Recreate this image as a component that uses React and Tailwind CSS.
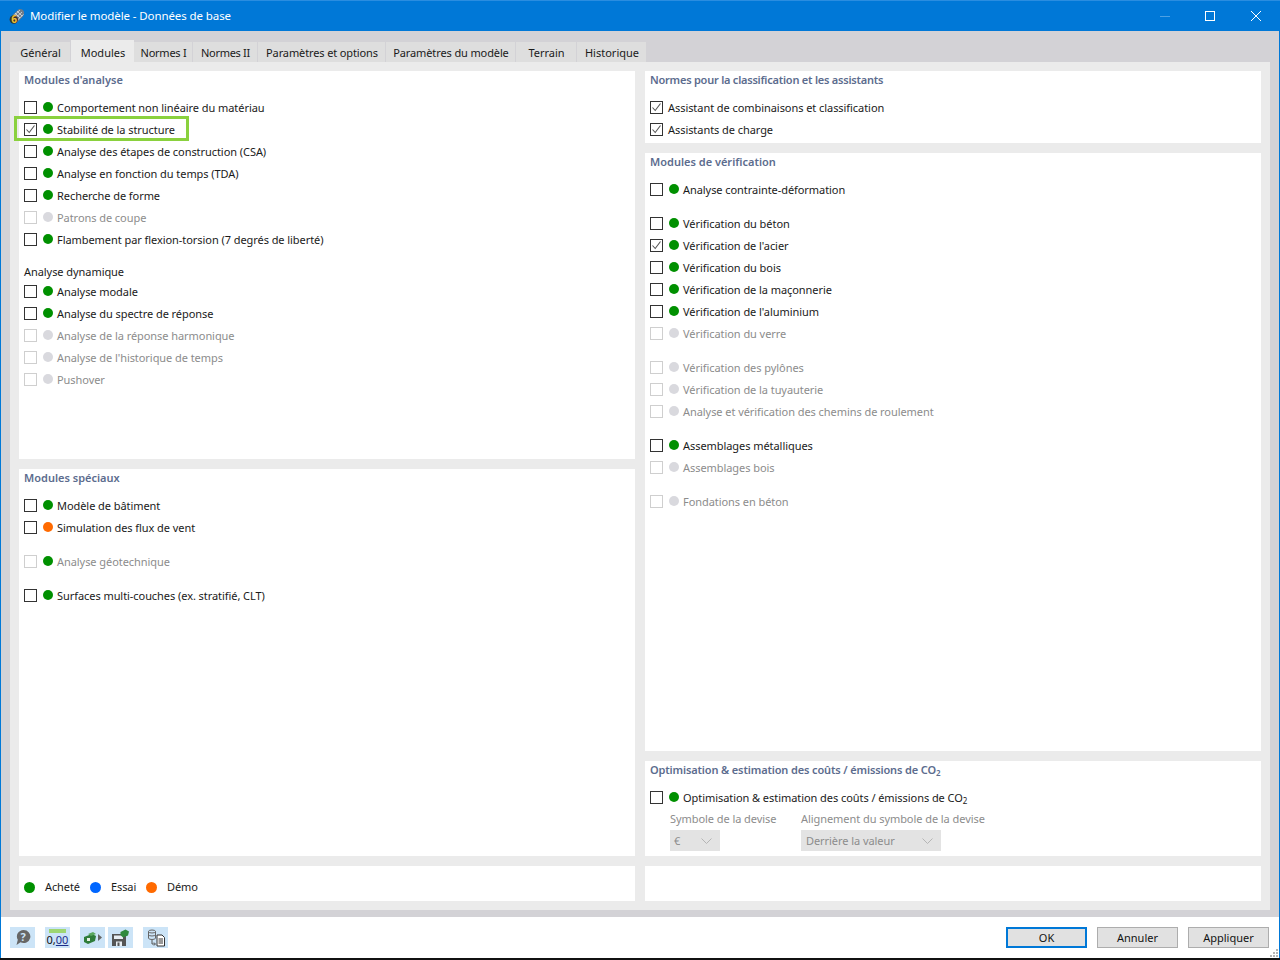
import React from "react";

const FONT = "font-['Noto_Sans','Open_Sans',sans-serif]";

function Check({ checked, disabled }) {
  return (
    <span className={`mt-[5px] flex h-[13px] w-[13px] shrink-0 items-center justify-center border bg-white ${disabled ? "border-[#cfcfcf]" : "border-[#333333]"}`}>
      {checked && (
        <svg width="11" height="11" viewBox="0 0 11 11" fill="none">
          <path d="M1.5 5.5 L4.2 8.5 L9.5 1.5" stroke="#555555" strokeWidth="1.1" />
        </svg>
      )}
    </span>
  );
}

function Row({ label, color = "bg-[#009000]", checked, disabled, dot = true, mt = "", highlight, dim }) {
  return (
    <div className={`relative flex h-[22px] items-start ${mt}`}>
      {highlight && <div className="absolute left-[-10px] top-[-2px] h-[25px] w-[175px] border-[3px] border-[#8ad13e]" />}
      <Check checked={checked} disabled={disabled} />
      {dot && <span className={`ml-[6px] mt-[6px] h-[10px] w-[10px] shrink-0 rounded-full ${disabled && !dim ? "bg-[#d9d9de]" : color}`} />}
      <span className={`${dot ? "ml-[4px]" : "ml-[5px]"} self-center whitespace-nowrap text-[11px] leading-none tracking-[-0.06px] ${disabled ? "text-[#8c8c8c]" : "text-[#1a1a1a]"}`}>
        {label}
      </span>
    </div>
  );
}

function Panel({ title, className = "", titleClass = "", children }) {
  return (
    <section className={`bg-white pl-[5px] ${className}`}>
      <h2 className={`mb-[9px] flex h-[16px] items-center text-[11px] font-semibold leading-none text-[#5c6c8e] ${titleClass}`}>{title}</h2>
      {children}
    </section>
  );
}

const Sub = () => <span className="relative top-[2px] text-[8px] leading-none">2</span>;

function Select({ value, className }) {
  return (
    <div className={`flex h-[21px] items-center justify-between bg-[#e3e3e3] pl-[4px] pr-[8px] text-[11px] text-[#8c8c8c] ${className}`}>
      <span className="pt-[2px]">{value}</span>
      <svg width="11" height="6" viewBox="0 0 11 6" fill="none"><path d="M0.5 0.5 L5.5 5.5 L10.5 0.5" stroke="#b5b5b5" /></svg>
    </div>
  );
}

const tabs = [
  ["Général", "w-[61px]"],
  ["Modules", "w-[63px]"],
  ["Normes I", "w-[59px] tracking-[-0.25px]"],
  ["Normes II", "w-[65px] tracking-[-0.3px]"],
  ["Paramètres et options", "w-[128px] tracking-[-0.12px]"],
  ["Paramètres du modèle", "w-[130px] tracking-[-0.12px]"],
  ["Terrain", "w-[61px]"],
  ["Historique", "w-[70px]"],
];

function IconBtn({ children, className = "" }) {
  return <div className={`flex h-[21px] w-[25px] items-center justify-center bg-[#cce4f7] ${className}`}>{children}</div>;
}

function DlgBtn({ label, primary }) {
  return (
    <div className={`flex h-[21px] w-[81px] items-center justify-center bg-[#e1e1e1] pt-[2px] text-[11px] text-[#111111] ${primary ? "border-2 border-[#0078d7]" : "border border-[#adadad]"}`}>
      {label}
    </div>
  );
}

export default function App() {
  return (
    <div className={`${FONT} flex h-[960px] w-[1280px] flex-col overflow-hidden bg-white`}>
      <header className="flex h-[31px] shrink-0 items-center border-t border-[#2a8de0] bg-[#0078d7] text-white">
        <svg className="ml-[9px]" width="16" height="22" viewBox="0 0 16 22">
          <g transform="translate(0 2.5)">
            <path d="M3 8 L10 1.5 Q14 1 15 4.5 Q15.5 7 14 9 L8 15 L4 12 Z" fill="#6f7b88" />
            <path d="M5 8 L11 2.5 M7 10 L13 4.5 M9 12 L14.5 7 M8 3.5 L13 8.5 M6 5.5 L11 10.5" stroke="#dbe2e9" strokeWidth="0.8" />
            <circle cx="4.8" cy="12" r="4.2" fill="#333333" />
            <text x="2.2" y="15.8" fontSize="10" fontWeight="700" fill="#f2c230">6</text>
          </g>
        </svg>
        <span className="ml-[5px] text-[11.5px] tracking-[-0.1px]">Modifier le modèle - Données de base</span>
        <div className="ml-auto flex items-center">
          <div className="mr-[35px] h-px w-[10px] bg-[#4da1e4]" />
          <div className="mr-[36px] h-[10px] w-[10px] border border-white" />
          <svg className="mr-[19px]" width="10" height="10" viewBox="0 0 10 10"><path d="M0 0 L10 10 M10 0 L0 10" stroke="#ffffff" strokeWidth="1" /></svg>
        </div>
      </header>

      <div className="flex min-h-0 flex-1 flex-col border-x border-[#0078d7] bg-[#d3d2d6]">
        <nav className="flex h-[31px] shrink-0 items-end pl-[9px]">
          {tabs.map(([t, w], i) => (
            <div
              key={t}
              className={`flex items-center justify-center pl-[1px] text-[11px] text-[#1a1a1a] ${w} ${i === 1 ? "h-[22px] bg-[#ebebeb] pt-[4px]" : "h-[20px] border-r border-[#d3d2d6] bg-[#dedede] pt-[2px]"}`}
            >
              {t}
            </div>
          ))}
        </nav>
        <div className="mx-[9px] flex h-[848px] shrink-0 gap-[10px] bg-[#ebebeb] p-[9px]">
          <div className="flex w-[616px] flex-col gap-[10px]">
            <Panel title="Modules d'analyse" className="h-[388px]">
              <Row label="Comportement non linéaire du matériau" />
              <Row label="Stabilité de la structure" checked highlight />
              <Row label="Analyse des étapes de construction (CSA)" />
              <Row label="Analyse en fonction du temps (TDA)" />
              <Row label="Recherche de forme" />
              <Row label="Patrons de coupe" disabled />
              <Row label="Flambement par flexion-torsion (7 degrés de liberté)" />
              <div className="mt-[14px] flex h-[16px] items-center text-[11px] tracking-[-0.06px] text-[#1a1a1a]">Analyse dynamique</div>
              <Row label="Analyse modale" />
              <Row label="Analyse du spectre de réponse" />
              <Row label="Analyse de la réponse harmonique" disabled />
              <Row label="Analyse de l'historique de temps" disabled />
              <Row label="Pushover" disabled />
            </Panel>
            <Panel title="Modules spéciaux" className="h-[387px]">
              <Row label="Modèle de bâtiment" />
              <Row label="Simulation des flux de vent" color="bg-[#ff6a00]" />
              <Row label="Analyse géotechnique" disabled dim mt="mt-[12px]" />
              <Row label="Surfaces multi-couches (ex. stratifié, CLT)" mt="mt-[12px]" />
            </Panel>
            <div className="flex h-[35px] items-center bg-white pl-[5px] pt-[7px] text-[11px] tracking-[-0.1px] text-[#1a1a1a]">
              <span className="h-[11px] w-[11px] rounded-full bg-[#009000]" />
              <span className="ml-[10px] w-[35px]">Acheté</span>
              <span className="ml-[10px] h-[11px] w-[11px] rounded-full bg-[#0066ff]" />
              <span className="ml-[10px] w-[25px]">Essai</span>
              <span className="ml-[10px] h-[11px] w-[11px] rounded-full bg-[#ff6a00]" />
              <span className="ml-[10px]">Démo</span>
            </div>
          </div>

          <div className="flex w-[616px] flex-col gap-[10px]">
            <Panel title="Normes pour la classification et les assistants" titleClass="tracking-[-0.23px]" className="h-[72px]">
              <Row label="Assistant de combinaisons et classification" checked dot={false} />
              <Row label="Assistants de charge" checked dot={false} />
            </Panel>
            <Panel title="Modules de vérification" className="h-[598px]">
              <Row label="Analyse contrainte-déformation" />
              <Row label="Vérification du béton" mt="mt-[12px]" />
              <Row label="Vérification de l'acier" checked />
              <Row label="Vérification du bois" />
              <Row label="Vérification de la maçonnerie" />
              <Row label="Vérification de l'aluminium" />
              <Row label="Vérification du verre" disabled />
              <Row label="Vérification des pylônes" disabled mt="mt-[12px]" />
              <Row label="Vérification de la tuyauterie" disabled />
              <Row label="Analyse et vérification des chemins de roulement" disabled />
              <Row label="Assemblages métalliques" mt="mt-[12px]" />
              <Row label="Assemblages bois" disabled />
              <Row label="Fondations en béton" disabled mt="mt-[12px]" />
            </Panel>
            <Panel title={<span className="whitespace-nowrap">Optimisation &amp; estimation des coûts / émissions de CO<Sub /></span>} titleClass="tracking-[-0.14px]" className="h-[95px]">
              <Row label={<>Optimisation &amp; estimation des coûts / émissions de CO<Sub /></>} />
              <div className="mt-[1px] flex pl-[20px] text-[11px] tracking-[-0.06px] text-[#8c8c8c]">
                <div className="w-[131px]">
                  <div className="flex h-[21px] items-center">Symbole de la devise</div>
                  <Select value="€" className="w-[50px]" />
                </div>
                <div>
                  <div className="flex h-[21px] items-center">Alignement du symbole de la devise</div>
                  <Select value="Derrière la valeur" className="w-[140px] pl-[5px]" />
                </div>
              </div>
            </Panel>
            <div className="h-[35px] bg-white" />
          </div>
        </div>
        <div className="h-[7px] shrink-0" />
      </div>

      <footer className="relative flex h-[41px] shrink-0 items-center border-x border-[#0078d7] pl-[9px]">
        <IconBtn>
          <svg width="16" height="17" viewBox="0 0 16 17">
            <path d="M8.5 1 A6.8 6.5 0 1 1 5.5 13.3 L1.5 16 L2.8 10.8 A6.8 6.5 0 0 1 8.5 1 Z" fill="#666666" />
            <text x="5.4" y="11.5" fontSize="11" fontWeight="700" fill="#cce4f7">?</text>
          </svg>
        </IconBtn>
        <IconBtn className="ml-[10px] flex-col">
          <span className="h-[4px] w-[17px] bg-[#9ed672]" />
          <span className="mt-[1px] text-[11px] leading-[12px] text-[#111111]">0,<span className="text-[#1c2d8a] underline">00</span></span>
        </IconBtn>
        <IconBtn className="ml-[10px]">
          <svg width="19" height="14" viewBox="0 0 19 14">
            <path d="M1 6 L9 3 L13 5 L12 10 L5 13 L1 11 Z" fill="#2f7d3a" />
            <path d="M5 3 L10 1 L13 3 L8 5 Z" fill="#5aa85f" />
            <rect x="4" y="7" width="3" height="3" fill="#e5efe0" />
            <path d="M15 3 L19 6.5 L15 10 Z" fill="#666666" />
          </svg>
        </IconBtn>
        <IconBtn className="ml-[3px]">
          <svg width="19" height="18" viewBox="0 0 19 18">
            <path d="M1 5 H13 L15 7 V17 H1 Z" fill="#555555" />
            <rect x="3" y="6.5" width="9" height="3.5" fill="#e8eef3" />
            <rect x="5" y="12.5" width="6" height="4.5" fill="#e8eef3" />
            <rect x="6.5" y="13.5" width="2" height="3.5" fill="#555555" />
            <path d="M9.5 3 L14.5 0.5 L18 2.5 L17 6.5 L12 8.5 L9.5 6 Z" fill="#2f8a3e" />
          </svg>
        </IconBtn>
        <IconBtn className="ml-[10px]">
          <svg width="20" height="18" viewBox="0 0 20 18" fill="none">
            <ellipse cx="6" cy="2.5" rx="3.5" ry="1.5" stroke="#666666" />
            <path d="M2.5 2.5 V9 A3.5 1.5 0 0 0 9.5 9 V2.5 M2.5 5.5 A3.5 1.5 0 0 0 9.5 5.5" stroke="#666666" />
            <path d="M6 11 V15 H9 M8 13.5 L9.5 15 L8 16.5" stroke="#555555" />
            <path d="M11 6 H16 L18.5 8.5 V17 H11 Z" fill="#ffffff" stroke="#333333" />
            <path d="M12.5 10 H17 M12.5 12 H17 M12.5 14 H17" stroke="#333333" />
          </svg>
        </IconBtn>
        <div className="ml-auto mr-[10px] flex gap-[10px]">
          <DlgBtn label="OK" primary />
          <DlgBtn label="Annuler" />
          <DlgBtn label="Appliquer" />
        </div>
        <svg className="absolute bottom-0 right-0" width="10" height="10" viewBox="0 0 10 10" fill="#b5b5b5">
          <rect x="7" y="1" width="2" height="2" /><rect x="4" y="4" width="2" height="2" /><rect x="7" y="4" width="2" height="2" />
          <rect x="1" y="7" width="2" height="2" /><rect x="4" y="7" width="2" height="2" /><rect x="7" y="7" width="2" height="2" />
        </svg>
      </footer>
      <div className="h-[2px] shrink-0 bg-[#111111]" />
    </div>
  );
}
